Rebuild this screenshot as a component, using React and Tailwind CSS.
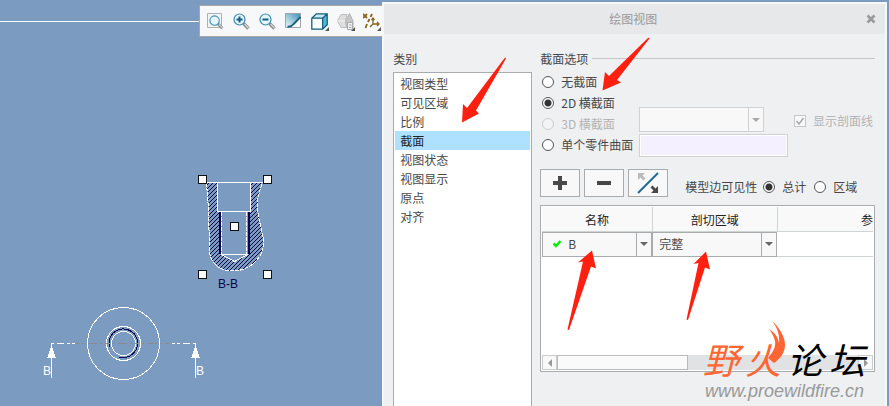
import React, { useState } from "react";
import clsx from "clsx";

const CATEGORIES = ["视图类型", "可见区域", "比例", "截面", "视图状态", "视图显示", "原点", "对齐"];

const SECTION_MODES = [
  { value: "none", label: "无截面" },
  { value: "2d", label: "2D 横截面" },
  { value: "3d", label: "3D 横截面", disabled: true },
  { value: "surface", label: "单个零件曲面" },
];

function Magnifier({ sign }) {
  return (
    <>
      <path d="M10.500 10.500l5 5" stroke="#8d8d8d" strokeWidth="3.400" />
      <path d="M11.500 11l4 4" stroke="#d5d5d5" strokeWidth="1.200" />
      <circle cx="6.500" cy="6.500" r="5.500" fill="#e4f5fb" stroke="#3b8cab" strokeWidth="1.200" />
      {sign && <path d="M3.500 6.500h6" stroke="#145f83" strokeWidth="2" />}
      {sign === "plus" && <path d="M6.500 3.500v6" stroke="#145f83" strokeWidth="2" />}
    </>
  );
}

function MoreMark() {
  return <path d="M18 14v4h-4z" fill="#555" />;
}

const TOOLS = [
  {
    label: "重新调整",
    icon: (
      <>
        <path d="M.5.5h14v14H.5z" fill="#f3f4f5" stroke="#aeb1b3" />
        <g transform="translate(2 2) scale(.86)">
          <Magnifier />
        </g>
      </>
    ),
  },
  { label: "放大", icon: <Magnifier sign="plus" /> },
  { label: "缩小", icon: <Magnifier sign="minus" /> },
  {
    label: "重画",
    icon: (
      <>
        <defs>
          <linearGradient id="repaint" x1="1" y1="0" x2="0" y2="1">
            <stop offset="0" stopColor="#3d91b4" />
            <stop offset="1" stopColor="#f1fafd" />
          </linearGradient>
        </defs>
        <path d="M.5.5h15v14H.5z" fill="url(#repaint)" stroke="#9ba4a9" />
        <path d="M6 14C10 12 12 9 15 5v9z" fill="#fff" />
        <path d="M2.500 13.500c3 .5 5-1 6-2.500L15.500 4" fill="none" stroke="#155f7d" strokeWidth="1.800" />
      </>
    ),
  },
  {
    label: "显示样式",
    icon: (
      <>
        <path d="M.8 5.200l4.500-4.400h10.900v10.900l-4.500 4.500H.8z" fill="#c4edfa" />
        <path d="M.8 5.200h10.900v11H.8z" fill="#fafdff" />
        <path d="M11.700 5.200L16.200.8v10.900l-4.500 4.500z" fill="#57b9d9" />
        <path d="M.8 5.200l4.500-4.400h10.900v10.900l-4.500 4.500H.8zh10.900v11M11.700 5.200L16.200.8" fill="none" stroke="#155f7d" strokeWidth="1.300" />
        <MoreMark />
      </>
    ),
  },
  {
    label: "已命名视图",
    icon: (
      <>
        <path d="M.5 8L4 1.500h6L8.500 8l1.500 6.500H4z" fill="#dedede" stroke="#bdbdbd" />
        <path d="M.5 8h8" stroke="#f5f5f5" />
        <path d="M8.500 8L12.500.5 16 8v7H10z" fill="#c6c6c6" stroke="#b4b4b4" />
        <path d="M10.500 9.500h5v7h-5z" fill="#f1f1f1" stroke="#aaa" />
        <path d="M12 12h2.500M12 14.500h2.500" stroke="#aaa" />
        <MoreMark />
      </>
    ),
  },
  {
    label: "基准显示过滤器",
    icon: (
      <>
        <path d="M0 1l4 4M4 1L0 5M9 1L7.500 4M6.500 6L5 9M4 11l-1.500 4" stroke="#88651d" strokeWidth="1.800" />
        <path d="M10 5v6h6M10 11l-3 3M8.500 7L10 5l1.500 2M14 9l2 2-2 2" fill="none" stroke="#88651d" strokeWidth="1.300" />
        <MoreMark />
      </>
    ),
  },
];

function Toolbar() {
  return (
    <div className="absolute top-[5px] left-[199px] flex h-8 gap-2 border border-[#a9a6a6] bg-[#f7f8fa] px-[7px] pt-[7px]">
      {TOOLS.map((tool) => (
        <button key={tool.label} type="button" aria-label={tool.label} className="h-[18px] w-[18px]">
          <svg viewBox="0 0 18 18" className="h-[18px] w-[18px]">
            {tool.icon}
          </svg>
        </button>
      ))}
    </div>
  );
}

function Handle({ x, y }) {
  return <rect x={x - 4} y={y - 4} width="8" height="8" fill="#fff" stroke="#111" />;
}

function Drawing() {
  return (
    <svg width="382" height="406" className="block" shapeRendering="crispEdges" fontFamily="'Liberation Sans', Arial, sans-serif">
      <defs>
        <pattern id="hatch" width="4" height="4" patternUnits="userSpaceOnUse">
          <path d="M0 3h1v1H0zM1 2h1v1H1zM2 1h1v1H2zM3 0h1v1H3z" fill="#07074a" />
        </pattern>
      </defs>
      <path d="M0 21.500h382" stroke="#fff" />

      {/* section B-B */}
      <path
        d="M206.500 182.500L208.500 210l1 40c0 12 9 21 23 21 17 0 31-13 31-28 0-12-6-22-6-38 0-10 3-15 5-22.500h-11.500v29h-2.500v43h-2L234.500 261l-13-6.500h-2v-43h-2v-29z"
        fill="url(#hatch)"
      />
      <path
        d="M206.500 182.500L208.500 210l1 40c0 12 9 21 23 21 17 0 31-13 31-28 0-12-6-22-6-38 0-10 3-15 5-22.500"
        fill="none"
        stroke="#fff"
        strokeDasharray="4 1"
      />
      <path d="M206 182.500h57M217.500 182.500v29h33v-29M221.500 254.500h26M221.500 254.500l13 7 13-7" fill="none" stroke="#fff" />
      <path d="M220 212v42M249 212v42" stroke="#07074a" strokeWidth="2" />
      <path d="M221.500 212v42M246.500 212v42" stroke="#fff" strokeDasharray="4 1" />
      <Handle x={202.500} y={179.500} />
      <Handle x={267.500} y={179.500} />
      <Handle x={234.500} y={226.500} />
      <Handle x={202.500} y={274.500} />
      <Handle x={267.500} y={274.500} />
      <text x="218" y="288" fontSize="12" fill="#07074a">B-B</text>

      {/* top view with the cutting plane */}
      <g fill="none" stroke="#fff">
        <circle cx="123.500" cy="343.500" r="36" />
        <circle cx="123.500" cy="343.500" r="17" />
        <circle cx="123.500" cy="343.500" r="12" />
        <path d="M119 357.500h4.500A14.300 14.300 0 1 0 109.500 347" stroke="#07074a" />
        <path d="M75 343.500h95" stroke="#8a8a8a" strokeDasharray="4 3 2 4 9 3 2 3" />
        <path d="M51.500 378v-34.500M195.500 378v-34.500" />
        <path d="M51 343.500h24M196 343.500h-24" strokeDasharray="3 3 7 3 3 2" />
      </g>
      <path d="M51.500 345l4.500 13h-9zM195.500 345l4.500 13h-9z" fill="#fff" />
      <text x="43" y="375" fontSize="12" fill="#fff">B</text>
      <text x="196" y="375" fontSize="12" fill="#fff">B</text>
    </svg>
  );
}

function Radio({ name, label, checked, disabled, onChange }) {
  return (
    <label className={clsx("flex items-center gap-[7px] whitespace-nowrap", disabled && "text-[#b4b4b4]")}>
      <input
        type="radio"
        name={name}
        checked={checked}
        disabled={disabled}
        onChange={onChange}
        className="h-3 w-3 shrink-0 appearance-none rounded-full border border-[#555] bg-white checked:bg-[radial-gradient(circle,#333_0_3px,#fff_4px)] disabled:border-[#ccc] disabled:bg-[#f3f4f5]"
      />
      {label}
    </label>
  );
}

function Combo({ label, options, disabled, className, selectClass, children }) {
  return (
    <div className={clsx("relative border bg-[#f8f8f8]", disabled ? "border-[#cfd1d3]" : "border-[#a9acae]", className)}>
      <select aria-label={label} disabled={disabled} className={clsx("block h-full w-full appearance-none pr-4 outline-none", selectClass)}>
        {options.map((o) => (
          <option key={o}>{o}</option>
        ))}
      </select>
      {children}
      <span
        className={clsx(
          "pointer-events-none absolute inset-y-0 right-0 flex w-[15px] items-center justify-center border-l",
          disabled ? "border-[#cfd1d3] text-[#a8a8a8]" : "border-[#a9acae] text-[#666]"
        )}
      >
        <svg viewBox="0 0 8 4" className="h-1 w-2" fill="currentColor">
          <path d="M0 0h8L4 4z" />
        </svg>
      </span>
    </div>
  );
}

function ToolButton({ label, children }) {
  return (
    <button type="button" aria-label={label} className="flex h-7 w-10 items-center justify-center border border-[#a9acae] bg-[#f8f8f8]">
      <svg viewBox="0 0 22 22" className="h-[22px] w-[22px]">
        {children}
      </svg>
    </button>
  );
}

function CategoryList() {
  const [selected, setSelected] = useState("截面");
  return (
    <div className="flex w-[139px] shrink-0 flex-col">
      <h2 className="h-[22px] leading-[18px]">类别</h2>
      <ul className="flex-1 border border-b-0 border-[#a9acae] bg-white p-px">
        {CATEGORIES.map((c) => (
          <li key={c}>
            <button
              type="button"
              onClick={() => setSelected(c)}
              className={clsx("block h-[19px] w-full pl-[5px] text-left leading-[17px]", c === selected && "bg-[#ade1ff] text-[#222]")}
            >
              {c}
            </button>
          </li>
        ))}
      </ul>
    </div>
  );
}

function SectionTable() {
  return (
    <div className="mt-2 flex h-[167px] flex-col border border-[#a9acae] bg-white p-px">
      <div className="flex-1 overflow-hidden">
        <table className="w-full table-fixed border-collapse">
          <thead>
            <tr className="h-6 bg-[#f9f9f9] text-[#222]">
              <th className="w-[110px] border-r border-b border-[#cfd4d4] pt-[3px] font-normal">名称</th>
              <th className="w-[125px] border-r border-b border-[#cfd4d4] pt-[3px] font-normal">剖切区域</th>
              <th className="border-b border-[#cfd4d4] pt-[3px] text-right font-normal">参</th>
            </tr>
          </thead>
          <tbody>
            <tr>
              <td className="p-0">
                <Combo label="名称" options={["B"]} className="h-[25px]" selectClass="pl-[25px]">
                  <svg viewBox="0 0 8 8" className="pointer-events-none absolute top-[7px] left-[10px] h-2 w-2">
                    <path d="M.5 3.500L3 6l4.500-5" fill="none" stroke="#00f000" strokeWidth="2.500" />
                  </svg>
                </Combo>
              </td>
              <td className="p-0">
                <Combo label="剖切区域" options={["完整"]} className="h-[25px]" selectClass="pl-[6px]" />
              </td>
              <td className="border-b border-[#cfd4d4] p-0" />
            </tr>
          </tbody>
        </table>
      </div>
      <div className="flex h-[15px] bg-[#e0e2e4]">
        <button type="button" aria-label="向左滚动" className="flex w-[15px] items-center justify-center border border-[#ccc] bg-[#f8f8f8]">
          <svg viewBox="0 0 4 8" className="h-2 w-1" fill="#999">
            <path d="M4 0v8L0 4z" />
          </svg>
        </button>
        <div className="w-[131px] border border-[#b9bbbd] bg-[#fafafa]" />
        <button type="button" aria-label="向右滚动" className="ml-auto flex w-[15px] items-center justify-center border border-[#ccc] bg-[#f8f8f8]">
          <svg viewBox="0 0 4 8" className="h-2 w-1" fill="#999">
            <path d="M0 0v8l4-4z" />
          </svg>
        </button>
      </div>
    </div>
  );
}

function SectionOptions() {
  const [mode, setMode] = useState("2d");
  const [edges, setEdges] = useState("total");
  return (
    <section className="min-w-0 flex-1">
      <h2 className="flex h-[21px] items-start gap-1 leading-[18px]">
        截面选项
        <span className="mt-2 h-px flex-1 bg-[#c3c6c9]" />
      </h2>
      <div className="flex">
        <div className="w-[99px] shrink-0 pl-[2px]">
          {SECTION_MODES.map((m) => (
            <div key={m.value} className="flex h-[21px] items-center">
              <Radio name="mode" label={m.label} disabled={m.disabled} checked={mode === m.value} onChange={() => setMode(m.value)} />
            </div>
          ))}
        </div>
        <div className="flex flex-1 flex-col gap-[2px] pt-9">
          <div className="flex items-center justify-between">
            <Combo label="3D 横截面" options={[""]} disabled className="h-[25px] w-[125px]" />
            <label className="flex items-center gap-[7px] pt-[2px] pr-[2px] text-[#b4b4b4]">
              <span className="relative h-3 w-3">
                <input type="checkbox" checked disabled readOnly className="block h-3 w-3 appearance-none border border-[#c4c6c8] bg-[#f8f8f8]" />
                <svg viewBox="0 0 12 12" className="pointer-events-none absolute inset-0 h-3 w-3">
                  <path d="M2.500 6L5 9l4.500-6" fill="none" stroke="#a8a8a8" strokeWidth="1.500" />
                </svg>
              </span>
              显示剖面线
            </label>
          </div>
          <input aria-label="单个零件曲面" className="h-[23px] w-[149px] border border-[#cfd1d3] bg-[#f4f0ff] shadow-[inset_0_0_0_1px_#fff]" />
        </div>
      </div>
      <div className="mt-3 flex gap-1">
        <ToolButton label="添加">
          <path d="M4 11h14M11 4v14" stroke="#484848" strokeWidth="4" />
        </ToolButton>
        <ToolButton label="移除">
          <path d="M4 11h14" stroke="#484848" strokeWidth="4" />
        </ToolButton>
        <ToolButton label="反向">
          <path d="M1 21L21 1" stroke="#1f6a8e" strokeWidth="2" />
          <path d="M1 1h7L5.500 3.500l3 3-2 2-3-3L1 8z" fill="#bbb" />
          <path d="M21 21h-7l2.500-2.500-3-3 2-2 3 3L21 14z" fill="#484848" />
        </ToolButton>
        <div className="ml-[13px] flex items-center gap-[6px] pt-2 whitespace-nowrap">
          <span>模型边可见性</span>
          <Radio name="edges" label="总计" checked={edges === "total"} onChange={() => setEdges("total")} />
          <span className="pl-[2px]">
            <Radio name="edges" label="区域" checked={edges === "area"} onChange={() => setEdges("area")} />
          </span>
        </div>
      </div>
      <SectionTable />
    </section>
  );
}

function Watermark() {
  return (
    <div className="pointer-events-none absolute top-[333px] left-[703px]">
      <div className="flex gap-[6px] text-[36px] leading-[50px] italic">
        <span className="text-[#ff6633]">野</span>
        <span className="text-[#ff6633]">火</span>
        <span className="text-black">论</span>
        <span className="text-black">坛</span>
      </div>
      <svg viewBox="0 0 18 42" className="absolute -top-3 left-[65px] h-[42px] w-[18px]" fill="#ff6633">
        <path d="M4 0C10 5 17 15 17 24c0 9-6 14-11 18l-6-5c5-6 8-11 7-17C6 16 4 12 1 8c6 4 9 8 10 14C12 14 9 6 4 0z" />
      </svg>
      <p className="pl-[2px] text-[18px] leading-4 text-[#999] italic [font-family:'Liberation_Sans',Arial,sans-serif]">www.proewildfire.cn</p>
    </div>
  );
}

function Pointers() {
  return (
    <svg width="889" height="406" className="pointer-events-none absolute top-0 left-0" fill="#ff2010">
      <path d="M462 122.500L463 104l4 4L505 57.500l1 1L476 110.500l3 3z" />
      <path d="M602.500 90.500L605 72l4 4L648.500 37.500l1 1L617 80l4 2.500z" />
      <path d="M592 250.500l4 18-5-2L569 330l-1.500-.5L583 261.500l-5 1z" />
      <path d="M706 251.500l4 18-5-2-17 52.500-1.500-.5 12-56.500-5 1z" />
    </svg>
  );
}

export default function App() {
  return (
    <div className="relative flex min-h-screen overflow-hidden bg-[#7c9bc0] text-xs text-[#484848] [font-family:'Noto_Sans_CJK_SC',sans-serif]">
      <main className="relative w-[43%] shrink-0">
        <Drawing />
        <Toolbar />
      </main>
      <div role="dialog" aria-label="绘图视图" className="relative mt-[2px] mr-[2px] flex min-w-0 flex-1 flex-col border-2 border-b-0 border-[#f6f7f8] bg-[#eef0f2]">
        <header className="flex h-[30px] items-center bg-[#e6e8ea] pr-[9px] text-[#999]">
          <h1 className="flex-1 pl-4 text-center">绘图视图</h1>
          <button type="button" aria-label="关闭" className="flex h-4 w-[10px] items-center">
            <svg viewBox="0 0 10 10" className="h-[10px] w-[10px]">
              <path d="M1.500 1.500l7 7M8.500 1.500l-7 7" stroke="#999" strokeWidth="2.500" />
            </svg>
          </button>
        </header>
        <div className="flex flex-1 gap-2 pt-4 pr-[10px] pl-[9px]">
          <CategoryList />
          <SectionOptions />
        </div>
      </div>
      <Pointers />
      <Watermark />
    </div>
  );
}
